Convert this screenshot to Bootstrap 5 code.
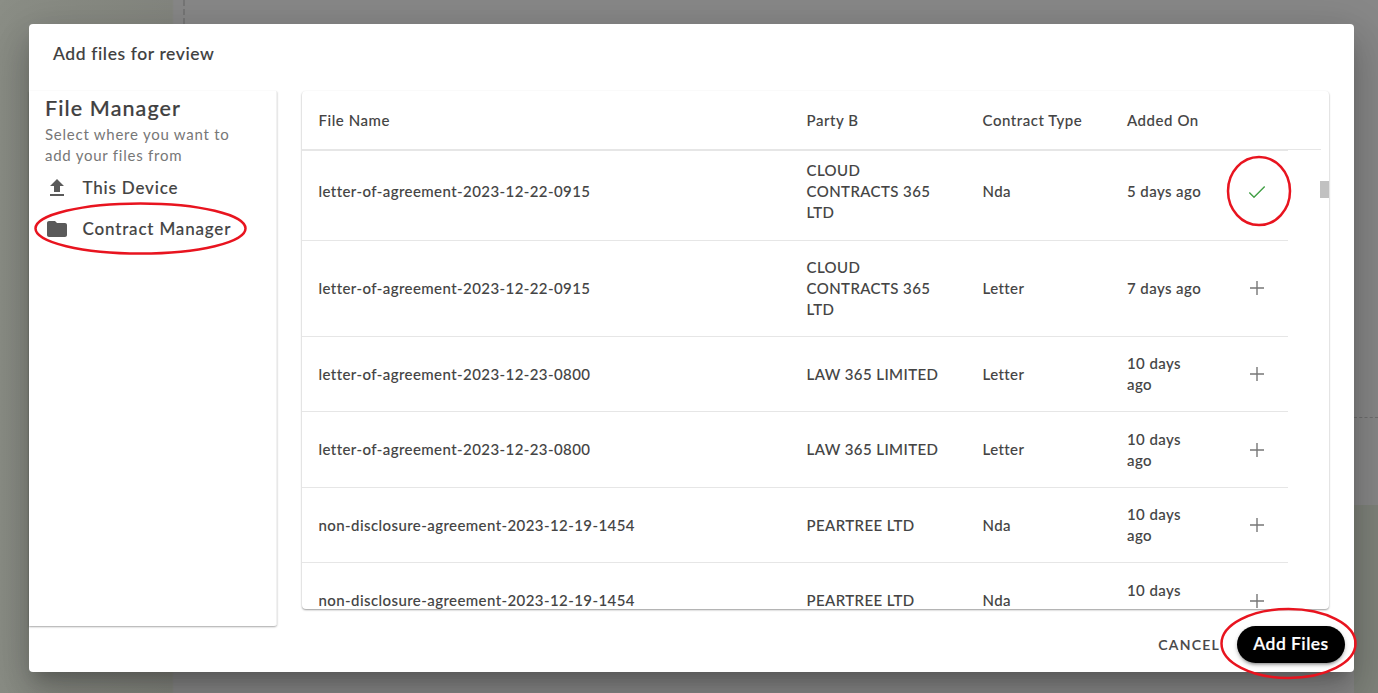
<!DOCTYPE html>
<html lang="en"><head><meta charset="utf-8"><title>Add files</title>
<link href="https://cdn.jsdelivr.net/npm/bootstrap@5.3.0/dist/css/bootstrap.min.css" rel="stylesheet">
<style>
html,body{height:693px;overflow:hidden}
body{font-family:"Lato","Noto Sans",sans-serif;color:#444;position:relative;
 background:
  linear-gradient(#7f837b,#7f837b) right bottom/24px 188px no-repeat,
  linear-gradient(90deg,#8b8e86 0,#84867f 172px,transparent 174px) left top/174px 100% no-repeat,
  #888888}
.bgline{position:absolute;left:183px;top:0;height:24px;border-left:2px dashed #767676}
.bgline2{position:absolute;right:0;top:417px;width:24px;border-top:1px dashed #6f6f6f}
.dlg{position:absolute;left:29px;top:24px;width:1325px;height:648px;background:#fff;border-radius:4px;box-shadow:0 11px 15px -7px rgba(0,0,0,.2),0 24px 38px 3px rgba(0,0,0,.14),0 9px 46px 8px rgba(0,0,0,.12);display:flex;flex-direction:column}
.dlg-title{height:68px;padding:19px 24px 0;font-size:17.5px;line-height:22px;font-weight:500;letter-spacing:.6px;color:#404040;-webkit-text-stroke:.12px #404040}
.dlg-body{height:535px;display:flex;gap:25px;padding-right:25px}
.side{width:248px;height:535px;box-shadow:0 1px 2px rgba(0,0,0,.35);border-radius:0 0 3px 0;padding:4px 16px;border-right:1px solid #f1f1f1}
.side h2{font-size:21.5px;line-height:26px;font-weight:500;margin:0 0 3px;letter-spacing:1.1px;color:#404040;-webkit-text-stroke:.2px #404040}
.side p{font-size:15px;line-height:21px;margin:0 0 1px;color:#777;letter-spacing:.75px;width:195px}
.srow{display:flex;align-items:center;height:41px;font-size:17px;font-weight:500;letter-spacing:.82px;color:#444;-webkit-text-stroke:.12px #444}
.srow svg{width:24px;height:24px;margin-right:13.5px;fill:#5a5a5a;flex:none}
.tcard{flex:1;height:518px;overflow:hidden;border-radius:4px;box-shadow:0 1px 2px rgba(0,0,0,.4);position:relative}
.tb{table-layout:fixed;border-collapse:collapse;width:986px;font-size:15px;letter-spacing:.42px;color:#444;font-weight:500;-webkit-text-stroke:.08px #444}
.tb td,.tb th{padding:0 16.5px;line-height:21px;border-bottom:1px solid #e6e6e6;vertical-align:middle;font-weight:500}
.tb th{height:59px;letter-spacing:.55px;position:relative}
.hline{position:absolute;left:0;top:58px;width:1019px;border-top:1px solid #e6e6e6}
.tb .ic{padding:0 0 0 2px;text-align:center}
.tb .ic svg{width:24px;height:24px;display:block;margin:0 auto}
.r1{height:90px}.r2{height:96px}.r3,.r4{height:75.5px}
.tb .r1 td{padding-bottom:7px}
.tb .r3 td,.tb .r4 td{padding-top:1px}
.tb-wrap{height:518px;overflow:hidden}
.sb{position:absolute;right:0;top:90px;width:9px;height:17px;background:#c1c1c1}
.dlg-foot{flex:1;display:flex;justify-content:flex-end;align-items:center;padding:0 9px 9px 0}
.btn-cancel{font-size:14px;font-weight:600;letter-spacing:1.25px;color:#484848;background:none;border:0;padding:0;margin-right:17px;-webkit-text-stroke:.1px #484848}
.btn-add{background:#000;color:#fff;border:0;border-radius:19px;height:37px;width:108px;font-size:17.500px;font-weight:600;letter-spacing:.45px;padding:0;box-shadow:0 3px 3px -2px rgba(0,0,0,.3),0 2px 4px rgba(0,0,0,.25);-webkit-text-stroke:.2px #fff}
.btn-add:hover{background:#000;color:#fff}
.ink{position:absolute;left:0;top:0;width:1378px;height:693px;pointer-events:none}
</style></head><body>
<div class="bgline"></div><div class="bgline2"></div>
<div class="dlg">
 <div class="dlg-title">Add files for review</div>
 <div class="dlg-body">
  <div class="side">
   <h2>File Manager</h2>
   <p>Select where you want to add your files from</p>
   <div class="srow"><svg viewBox="0 0 24 24"><path d="M5 20h14v-2H5v2zm0-10h4v6h6v-6h4l-7-7-7 7z"/></svg>This Device</div>
   <div class="srow"><svg viewBox="0 0 24 24"><path d="M10 4H4c-1.100 0-2 .9-2 2v12c0 1.100.9 2 2 2h16c1.100 0 2-.9 2-2V8c0-1.100-.9-2-2-2h-8l-2-2z"/></svg>Contract Manager</div>
  </div>
  <div class="tcard">
   <div class="hline"></div><div class="sb"></div>
   <div class="tb-wrap">
   <table class="tb">
    <colgroup><col style="width:488px"><col style="width:176px"><col style="width:144.500px"><col style="width:113px"><col style="width:64.500px"></colgroup>
    <thead><tr><th>File Name</th><th>Party B</th><th>Contract Type</th><th>Added On</th><th></th></tr></thead>
    <tbody>
     <tr class="r1"><td>letter-of-agreement-2023-12-22-0915</td><td>CLOUD CONTRACTS 365 LTD</td><td>Nda</td><td>5 days ago</td><td class="ic"><svg viewBox="0 0 24 24" fill="#43a047"><path d="M9 16.200 4.800 12l-1 1L9 18.200 20.200 7l-1-1z"/></svg></td></tr>
     <tr class="r2"><td>letter-of-agreement-2023-12-22-0915</td><td>CLOUD CONTRACTS 365 LTD</td><td>Letter</td><td>7 days ago</td><td class="ic"><svg viewBox="0 0 24 24" fill="#777"><path d="M19 12.700h-6.300V19h-1.400v-6.300H5v-1.400h6.300V5h1.400v6.300H19z"/></svg></td></tr>
     <tr class="r3"><td>letter-of-agreement-2023-12-23-0800</td><td>LAW 365 LIMITED</td><td>Letter</td><td>10 days ago</td><td class="ic"><svg viewBox="0 0 24 24" fill="#777"><path d="M19 12.700h-6.300V19h-1.400v-6.300H5v-1.400h6.300V5h1.400v6.300H19z"/></svg></td></tr>
     <tr class="r4"><td>letter-of-agreement-2023-12-23-0800</td><td>LAW 365 LIMITED</td><td>Letter</td><td>10 days ago</td><td class="ic"><svg viewBox="0 0 24 24" fill="#777"><path d="M19 12.700h-6.300V19h-1.400v-6.300H5v-1.400h6.300V5h1.400v6.300H19z"/></svg></td></tr>
     <tr class="r4"><td>non-disclosure-agreement-2023-12-19-1454</td><td>PEARTREE LTD</td><td>Nda</td><td>10 days ago</td><td class="ic"><svg viewBox="0 0 24 24" fill="#777"><path d="M19 12.700h-6.300V19h-1.400v-6.300H5v-1.400h6.300V5h1.400v6.300H19z"/></svg></td></tr>
     <tr class="r4"><td>non-disclosure-agreement-2023-12-19-1454</td><td>PEARTREE LTD</td><td>Nda</td><td>10 days ago</td><td class="ic"><svg viewBox="0 0 24 24" fill="#777"><path d="M19 12.700h-6.300V19h-1.400v-6.300H5v-1.400h6.300V5h1.400v6.300H19z"/></svg></td></tr>
    </tbody>
   </table>
   </div>
  </div>
 </div>
 <div class="dlg-foot"><button class="btn-cancel" type="button">CANCEL</button><button class="btn btn-add" type="button">Add Files</button></div>
</div>
<svg class="ink" viewBox="0 0 1378 693" fill="none" stroke="#e8141f" stroke-width="2.500">
 <ellipse cx="140.500" cy="228.500" rx="105" ry="25"/>
 <ellipse cx="1259" cy="191" rx="31" ry="34"/>
 <ellipse cx="1288.500" cy="643.500" rx="67" ry="34.500"/>
</svg>
<script src="https://cdn.jsdelivr.net/npm/bootstrap@5.3.0/dist/js/bootstrap.bundle.min.js"></script>
</body></html>
